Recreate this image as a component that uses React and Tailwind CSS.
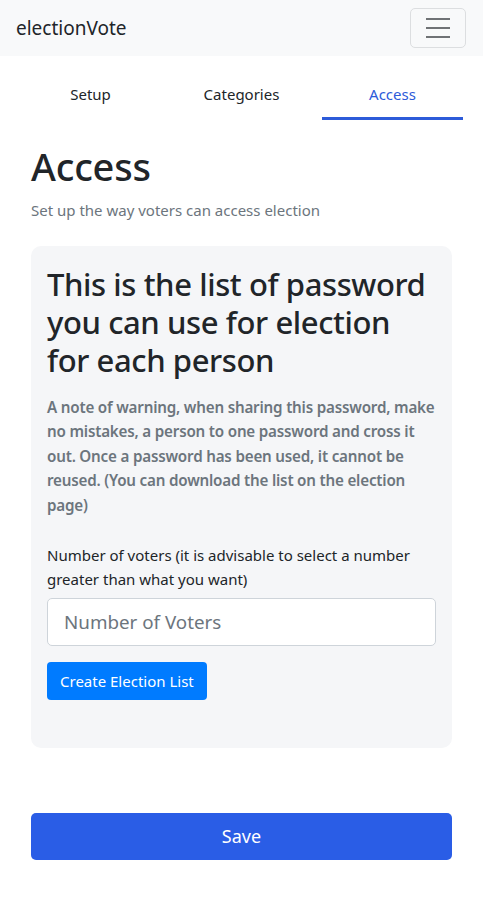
export default function App() {
  return (
    <div className="min-h-[908px] bg-white text-[#212529] font-['Noto_Sans',sans-serif]">
      <header className="flex h-14 items-center justify-between bg-[#f8f9fa] pl-4 pr-[17px]">
        <span className="text-[19px] leading-none">electionVote</span>
        <button className="flex h-10 w-[56px] flex-col items-center justify-center gap-[7px] rounded-[5px] border border-[#dcdee0]">
          <span className="block h-[2px] w-6 bg-[#6f7275]" />
          <span className="block h-[2px] w-6 bg-[#6f7275]" />
          <span className="block h-[2px] w-6 bg-[#6f7275]" />
        </button>
      </header>

      <nav className="mt-[27px] grid grid-cols-3 gap-[10px] px-5 text-[15px]">
        <div className="pb-[14px] text-center">Setup</div>
        <div className="pb-[14px] text-center">Categories</div>
        <div className="border-b-[3px] border-[#2d5bd9] pb-[11px] text-center text-[#2d5bd9]">Access</div>
      </nav>

      <main className="px-[31px]">
        <h1 className="mt-[24px] text-[38px] font-medium leading-[1.2] tracking-[-0.2px]">Access</h1>
        <p className="mt-[10px] text-[15px] text-[#6c757d]">Set up the way voters can access election</p>

        <section className="mt-[24px] rounded-[10px] bg-[#f5f6f8] px-4 pb-[48px] pt-[19px]">
          <h2 className="whitespace-nowrap text-[31px] font-medium leading-[38px] tracking-[-0.4px]">
            This is the list of password
            <br />
            you can use for election
            <br />
            for each person
          </h2>
          <p className="mt-[16px] whitespace-nowrap text-[15.2px] font-semibold leading-[24.5px] tracking-[-0.2px] text-[#6c757d]">
            A note of warning, when sharing this password, make
            <br />
            no mistakes, a person to one password and cross it
            <br />
            out. Once a password has been used, it cannot be
            <br />
            reused. (You can download the list on the election
            <br />
            page)
          </p>
          <label className="mt-[26px] block text-[15px] leading-[24px]">
            Number of voters (it is advisable to select a number
            <br />
            greater than what you want)
          </label>
          <input
            placeholder="Number of Voters"
            className="mt-[7px] block h-12 w-full rounded-[5px] border border-[#ced4da] bg-white px-4 text-[18.8px] placeholder:text-[#6c757d] outline-none"
          />
          <button className="mt-4 h-[38px] rounded-[4px] bg-[#007bff] px-[13px] text-[15px] text-white">
            Create Election List
          </button>
        </section>

        <button className="mt-[65px] h-[47px] w-full rounded-[5px] bg-[#2a5de6] text-[18px] text-white">Save</button>
      </main>
    </div>
  );
}
